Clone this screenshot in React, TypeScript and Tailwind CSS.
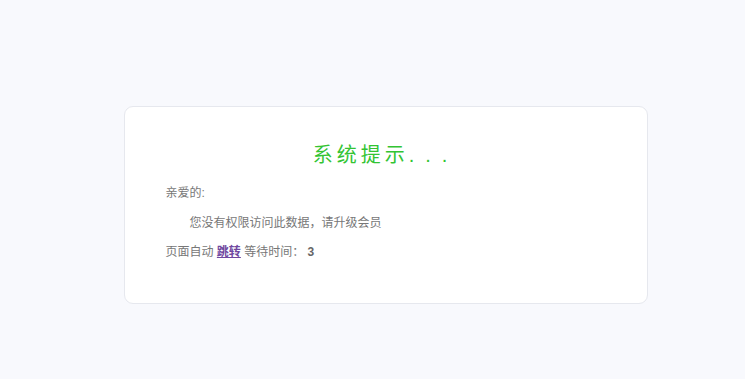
export default function App() {
  return (
    <div
      className="min-h-[379px] w-full bg-[#f8f9fd] flex justify-center pt-[106px] pl-[26px]"
      style={{ fontFamily: '"Liberation Sans", "Noto Sans CJK SC", sans-serif' }}
    >
      <div className="w-[524px] h-[198px] bg-white border border-[#e6e8ee] rounded-[9px] pt-[34px] px-[41px]">
        {/* Title */}
        <h1 className="text-center text-[20px] leading-[28px] tracking-[4px] text-[#33c433] font-normal">
          系统提示<span className="tracking-[11px]">...</span>
        </h1>

        <div className="mt-[14px] text-[12px] leading-[20px] text-[#777777] flex flex-col gap-[10px]">
          <p>亲爱的:</p>
          <p className="indent-[24px]">您没有权限访问此数据，请升级会员</p>
          <p className="-mt-[1px]">
            页面自动{" "}
            <a href="#" className="text-[#7048a0] underline font-bold">
              跳转
            </a>{" "}
            等待时间：{" "}
            <b className="text-[#666666]">3</b>
          </p>
        </div>
      </div>
    </div>
  );
}
